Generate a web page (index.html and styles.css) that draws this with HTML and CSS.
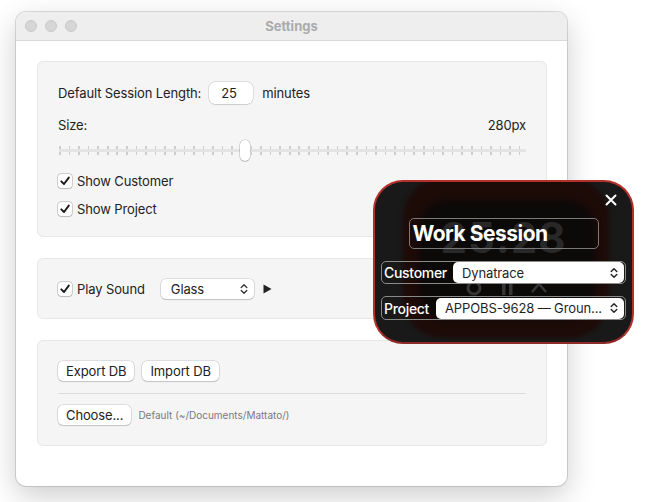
FILE: index.html
```html
<!DOCTYPE html>
<html>
<head>
<meta charset="utf-8">
<link rel="stylesheet" href="styles.css">
</head>
<body>
<div class="window">
  <div class="titlebar">
    <div class="lights"><span></span><span></span><span></span></div>
    <div class="title">Settings</div>
    <div></div>
  </div>
  <div class="content">
    <section class="group g1">
      <div class="row r-length">
        <span>Default Session Length:</span>
        <span class="field">25</span>
        <span class="unit">minutes</span>
      </div>
      <div class="row r-size"><span>Size:</span><span>280px</span></div>
      <div class="slider">
        <div class="track"></div>
        <div class="thumb" style="left:181px"></div>
      </div>
      <div class="check c1"><span class="box"><svg viewBox="0 0 14 14" width="14" height="14"><path d="M3.3 7.3 L6 10 L10.8 3.6" fill="none" stroke="#1a1a1a" stroke-width="1.9" stroke-linecap="round" stroke-linejoin="round"/></svg></span>Show Customer</div>
      <div class="check c2"><span class="box"><svg viewBox="0 0 14 14" width="14" height="14"><path d="M3.3 7.3 L6 10 L10.8 3.6" fill="none" stroke="#1a1a1a" stroke-width="1.9" stroke-linecap="round" stroke-linejoin="round"/></svg></span>Show Project</div>
    </section>
    <section class="group g2">
      <div class="row r-sound">
        <div class="check"><span class="box"><svg viewBox="0 0 14 14" width="14" height="14"><path d="M3.3 7.3 L6 10 L10.8 3.6" fill="none" stroke="#1a1a1a" stroke-width="1.9" stroke-linecap="round" stroke-linejoin="round"/></svg></span>Play Sound</div>
        <div class="popup glass"><span>Glass</span><svg class="chev" viewBox="0 0 8 12" width="8" height="12"><path d="M1.2 4.5 L4 1.7 L6.8 4.5 M1.2 7.5 L4 10.3 L6.8 7.5" fill="none" stroke="#333" stroke-width="1.3" stroke-linecap="round" stroke-linejoin="round"/></svg></div>
        <svg class="play" viewBox="0 0 9 10" width="9" height="10"><path d="M0.5 0.5 L8.5 5 L0.5 9.5 Z" fill="#222"/></svg>
      </div>
    </section>
    <section class="group g3">
      <div class="row r-buttons">
        <span class="btn">Export DB</span>
        <span class="btn">Import DB</span>
      </div>
      <div class="divider"></div>
      <div class="row r-choose">
        <span class="btn">Choose...</span>
        <span class="path">Default (~/Documents/Mattato/)</span>
      </div>
    </section>
  </div>
</div>

<div class="overlay">
  <div class="ghost">
    <div class="ghost-red"></div>
    <div class="ghost-black"></div>
    <div class="ghost-time">25:28</div>
    <svg class="ghost-icons" viewBox="0 0 110 20" width="110" height="20">
      <circle cx="22" cy="10" r="6" fill="none" stroke="#363636" stroke-width="3"/>
      <rect x="50" y="3" width="3.5" height="14" fill="#363636"/>
      <rect x="57" y="3" width="3.5" height="14" fill="#363636"/>
      <path d="M80 14 L87 6 L94 14" fill="none" stroke="#363636" stroke-width="2.5"/>
    </svg>
  </div>
  <svg class="close" viewBox="0 0 12 12" width="12" height="12"><path d="M1.5 1.5 L10.5 10.5 M10.5 1.5 L1.5 10.5" stroke="#fff" stroke-width="2" stroke-linecap="round"/></svg>
  <div class="ov-body">
    <div class="ov-title">Work Session</div>
    <div class="ov-row cust">
      <span class="ov-label">Customer</span>
      <div class="ov-popup"><span>Dynatrace</span><svg class="chev" viewBox="0 0 8 12" width="8" height="12"><path d="M1.2 4.5 L4 1.7 L6.8 4.5 M1.2 7.5 L4 10.3 L6.8 7.5" fill="none" stroke="#222" stroke-width="1.4" stroke-linecap="round" stroke-linejoin="round"/></svg></div>
    </div>
    <div class="ov-row proj">
      <span class="ov-label">Project</span>
      <div class="ov-popup"><span>APPOBS-9628 — Groun...</span><svg class="chev" viewBox="0 0 8 12" width="8" height="12"><path d="M1.2 4.5 L4 1.7 L6.8 4.5 M1.2 7.5 L4 10.3 L6.8 7.5" fill="none" stroke="#222" stroke-width="1.4" stroke-linecap="round" stroke-linejoin="round"/></svg></div>
    </div>
  </div>
</div>
</body>
</html>
```

FILE: styles.css
```css
* { box-sizing: border-box; }
html, body { margin: 0; background: #fff; }
body {
  width: 648px;
  height: 502px;
  overflow: hidden;
  position: relative;
  padding: 12px 0 0 16px;
  font-family: Inter, "Noto Sans", sans-serif;
  font-size: 13px;
  letter-spacing: -0.12px;
  color: #222;
}

.window {
  width: 551px;
  height: 474px;
  border-radius: 10px;
  background: #fff;
  overflow: hidden;
  box-shadow: 0 0 0 1px rgba(0,0,0,0.13), 0 10px 30px rgba(0,0,0,0.2);
  display: flex;
  flex-direction: column;
}

.titlebar {
  height: 29px;
  flex: none;
  background: #eeeeee;
  border-bottom: 1px solid #d9d9d9;
  display: grid;
  grid-template-columns: 1fr auto 1fr;
  align-items: center;
}
.lights { display: flex; gap: 8px; padding-left: 9px; }
.lights span {
  width: 12px; height: 12px; border-radius: 50%;
  background: #d6d6d6; border: 1px solid #c9c9c9;
}
.title { font-weight: 700; color: #ababab; font-size: 13px; letter-spacing: 0; }

.content {
  padding: 20px 20px 0 21px;
  display: flex;
  flex-direction: column;
  gap: 21px;
}
.group {
  background: #f5f5f5;
  border: 1px solid #e7e7e7;
  border-radius: 6px;
  padding: 20px 20px 19px 20px;
  display: flex;
  flex-direction: column;
}
.g1 { padding-bottom: 18px; }
.g3 { padding-bottom: 20px; }
.row { display: flex; align-items: center; }

.r-length { height: 22px; }
.field {
  margin-left: 8px;
  width: 44px; height: 22px;
  background: #fff;
  border-radius: 6px;
  box-shadow: 0 0 0 0.5px rgba(0,0,0,0.18), 0 0.5px 1px rgba(0,0,0,0.08);
  padding-left: 12px;
  display: flex; align-items: center;
}
.unit { margin-left: 9px; }

.r-size { height: 18px; margin-top: 12px; justify-content: space-between; }

.slider { position: relative; height: 21px; margin-top: 6px; margin-left: 1px; }
.track {
  position: absolute; left: 0; right: 0; top: 6px; height: 9px;
  background: repeating-linear-gradient(to right, #cdcdcd 0, #cdcdcd 1.6px, transparent 1.6px, transparent 9.58px);
}
.track::before {
  content: ""; position: absolute; left: 0; right: 0; top: 3px; height: 3px; background: #e4e4e4;
}
.thumb {
  position: absolute; top: 0; width: 10px; height: 21px;
  background: #fff; border-radius: 5px;
  box-shadow: 0 0 0 0.5px rgba(0,0,0,0.25), 0 1px 1px rgba(0,0,0,0.12);
}

.check { display: flex; align-items: center; height: 18px; gap: 5px; }
.c1 { margin-top: 11px; }
.c2 { margin-top: 10px; }
.box {
  width: 14px; height: 14px; border-radius: 3px;
  background: #fff;
  box-shadow: 0 0 0 0.5px rgba(0,0,0,0.3), 0 0.5px 1px rgba(0,0,0,0.1);
  display: flex;
}

.r-sound { height: 20px; }
.popup {
  margin-left: 16px;
  width: 93px; height: 20px;
  background: #fff; border-radius: 5px;
  box-shadow: 0 0 0 0.5px rgba(0,0,0,0.2), 0 1px 1.5px rgba(0,0,0,0.12);
  display: flex; align-items: center; justify-content: space-between;
  padding: 0 6px 0 10px;
}
.play { margin-left: 9px; }

.r-buttons { gap: 8px; height: 20px; }
.btn {
  height: 20px; padding: 0 8px;
  background: #fff; border-radius: 5px;
  box-shadow: 0 0 0 0.5px rgba(0,0,0,0.2), 0 1px 1.5px rgba(0,0,0,0.12);
  display: flex; align-items: center;
}
.divider { height: 1px; background: #dcdcdc; margin: 12px 0 11px; }
.r-choose { height: 20px; gap: 7px; }
.path { font-size: 10px; color: #7a7a7a; letter-spacing: 0; }

/* floating timer overlay */
.overlay {
  position: absolute;
  left: 373px; top: 180px;
  width: 261px; height: 164px;
  border: 2px solid #b3302a;
  border-bottom-color: #8e2a28;
  border-radius: 30px;
  background: #191919;
  overflow: hidden;
  color: #fff;
}
.ghost { position: absolute; inset: 0; }
.ghost-red {
  position: absolute; left: 28px; top: -4px; width: 206px; height: 160px;
  border-radius: 40px; background: #1d0b08; filter: blur(2px);
}
.ghost-black {
  position: absolute; left: 44px; top: 18px; width: 176px; height: 120px;
  border-radius: 30px; background: #0c0909; filter: blur(3px);
}
.ghost-time {
  position: absolute; left: 0; right: 0; top: 30px;
  text-align: center;
  font-size: 42px; font-weight: 700; color: #282828;
  letter-spacing: 1px;
}
.ghost-icons { position: absolute; left: 77px; top: 96px; }
.close { position: absolute; left: 230px; top: 12px; }

.ov-body {
  position: relative;
  display: flex; flex-direction: column; align-items: center;
  padding-top: 36px;
}
.ov-title {
  width: 190px; height: 31px;
  border: 1px solid #7a7a7a; border-radius: 5px;
  font-size: 21px; font-weight: 700;
  padding-left: 3px;
  display: flex; align-items: center;
  letter-spacing: -0.5px;
}
.ov-row {
  width: 245px;
  border: 1px solid #8a8a8a; border-radius: 5px;
  display: flex; align-items: center;
  padding: 0 1px 0 1px;
}
.cust { height: 23px; margin-top: 12px; }
.proj { height: 24px; margin-top: 12px; }
.ov-label { font-size: 14px; font-weight: 500; color: #fff; padding-left: 1px; letter-spacing: -0.3px; }
.ov-popup {
  margin-left: auto;
  height: 21px;
  background: #fff; border-radius: 5px;
  color: #1f1f1f;
  display: flex; align-items: center; justify-content: space-between;
  padding: 0 6px 0 9px;
}
.cust .ov-popup { width: 171px; }
.proj .ov-popup { width: 188px; }
```
